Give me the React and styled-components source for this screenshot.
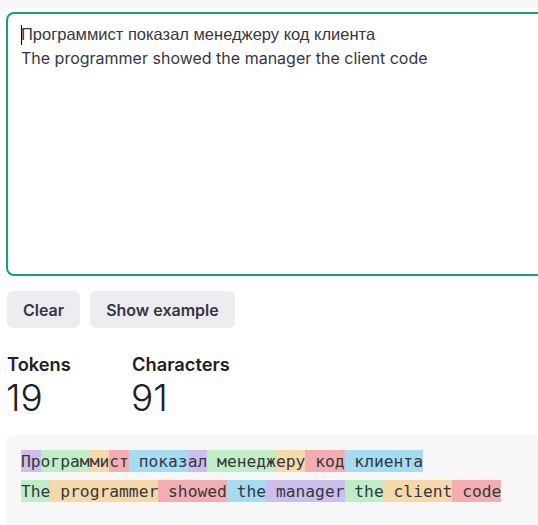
import React from 'react';
import styled, { createGlobalStyle } from 'styled-components';

const GlobalStyle = createGlobalStyle`
  html, body { margin: 0; padding: 0; background: #ffffff; overflow: hidden; }
  body { font-family: Inter, "Liberation Sans", Arial, sans-serif; color: #353740; }
  * { box-sizing: border-box; }
`;

const TOKEN_COLORS = [
  'rgba(107, 64, 216, 0.3)',
  'rgba(104, 222, 122, 0.4)',
  'rgba(244, 172, 54, 0.4)',
  'rgba(239, 65, 70, 0.4)',
  'rgba(39, 181, 234, 0.4)',
];

const TOKENS = [
  'Пр', 'ограм', 'ми', 'ст', ' показ', 'ал', ' менедж', 'еру', ' код', ' клиента',
  '\n',
  'The', ' programmer', ' showed', ' the', ' manager', ' the', ' client', ' code',
];

const LINES = [
  { text: 'Программист показал менеджеру код клиента', script: 'cyrillic' },
  { text: 'The programmer showed the manager the client code', script: 'latin' },
];

const Page = styled.div`
  display: flex;
  flex-direction: column;
  width: 100vw;
  height: 100vh;
  overflow: hidden;
`;

const TopStrip = styled.div`
  height: 8px;
  background: #f7f7f8;
  flex-shrink: 0;
`;

const Content = styled.main`
  display: flex;
  flex-direction: column;
  align-items: flex-start;
  padding: 4px 0 0 6px;
`;

const Editor = styled.div`
  width: 570px;
  height: 264px;
  border: 2px solid #10a37f;
  border-radius: 8px;
  padding: 8px 13px;
  font-size: 16px;
  line-height: 24px;
  color: #353740;
  white-space: pre;
  outline: none;
`;

const EditorLine = styled.div`
  font-family: ${(p) => (p.$script === 'cyrillic' ? '"Liberation Sans", Arial, sans-serif' : 'Inter, sans-serif')};
  font-size: ${(p) => (p.$script === 'cyrillic' ? '16.5px' : '16px')};
`;

const Caret = styled.span`
  display: inline-block;
  width: 1px;
  height: 20px;
  margin-right: -1px;
  vertical-align: -5px;
  background: #000000;
`;

const Actions = styled.div`
  display: flex;
  gap: 10px;
  margin-top: 15px;
  padding-left: 1px;
`;

const Button = styled.button`
  height: 37px;
  padding: 0 16px;
  border: none;
  border-radius: 6px;
  background: #ececf1;
  color: #353740;
  font-family: Inter, sans-serif;
  font-size: 16px;
  font-weight: 600;
  cursor: pointer;
`;

const Stats = styled.div`
  display: grid;
  grid-template-columns: 125px auto;
  margin-top: 24px;
  padding-left: 1px;
`;

const Stat = styled.div`
  display: flex;
  flex-direction: column;
`;

const StatLabel = styled.div`
  font-size: 18.3px;
  line-height: 24px;
  font-weight: 600;
  color: #202123;
`;

const StatValue = styled.div`
  font-size: 37px;
  line-height: 44px;
  font-weight: 300;
  color: #202123;
  margin-left: -1px;
`;

const TokenBox = styled.pre`
  margin: 15px 0 0 0;
  width: 570px;
  min-height: 130px;
  background: #f7f7f8;
  border-radius: 8px;
  padding: 11px 15px;
  font-family: "DejaVu Sans Mono", "Liberation Mono", monospace;
  font-size: 16.3px;
  line-height: 30px;
  color: #353740;
  white-space: pre-wrap;
`;

const Token = styled.span`
  background: ${(p) => p.$color};
  padding: 1.5px 0;
`;

export default function App() {
  const characters = TOKENS.join('').length;
  return (
    <Page>
      <GlobalStyle />
      <TopStrip />
      <Content>
        <Editor role="textbox" aria-multiline="true">
          {LINES.map((line, i) => (
            <EditorLine key={i} $script={line.script}>
              {i === 0 && <Caret />}
              {line.text}
            </EditorLine>
          ))}
        </Editor>
        <Actions>
          <Button type="button">Clear</Button>
          <Button type="button">Show example</Button>
        </Actions>
        <Stats>
          <Stat>
            <StatLabel>Tokens</StatLabel>
            <StatValue>{TOKENS.length}</StatValue>
          </Stat>
          <Stat>
            <StatLabel>Characters</StatLabel>
            <StatValue>{characters}</StatValue>
          </Stat>
        </Stats>
        <TokenBox>
          {TOKENS.map((t, i) => (
            <Token key={i} $color={TOKEN_COLORS[i % TOKEN_COLORS.length]}>
              {t}
            </Token>
          ))}
        </TokenBox>
      </Content>
    </Page>
  );
}
